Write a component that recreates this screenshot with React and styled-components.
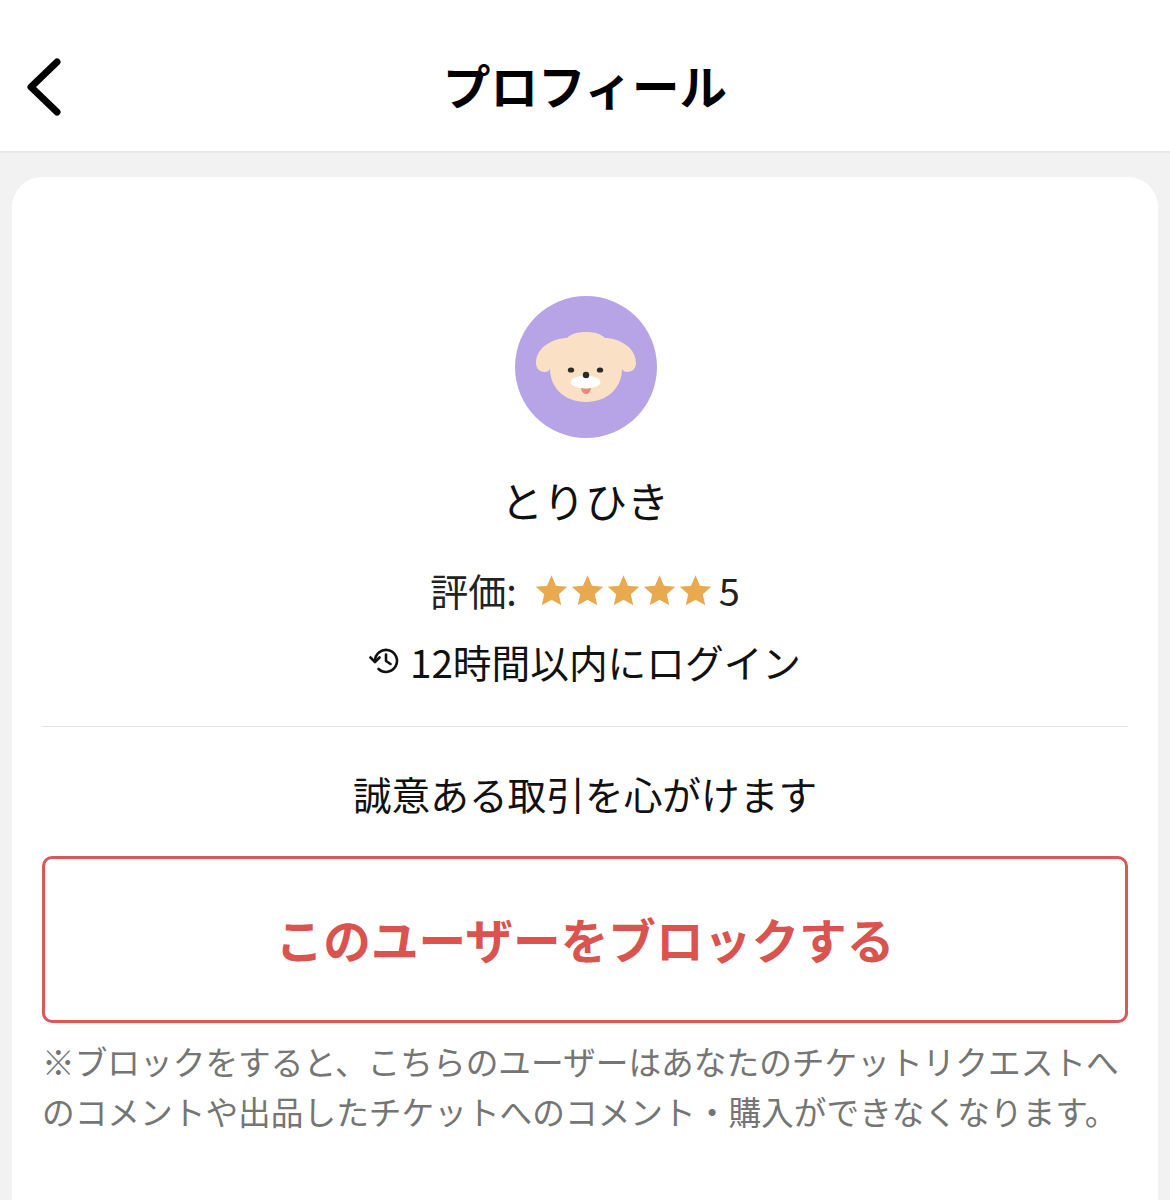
import React from 'react';
import styled, { createGlobalStyle } from 'styled-components';

const GlobalStyle = createGlobalStyle`
    html, body {
        margin: 0;
        padding: 0;
        background: #f2f2f2;
    }
    body {
        font-family: "Noto Sans CJK JP", "Noto Sans", sans-serif;
        color: #111;
    }
`;

const Page = styled.div`
    width: 1170px;
    height: 1200px;
    overflow: hidden;
    background: #f2f2f2;
`;

const Header = styled.header`
    height: 153px;
    padding-top: 18px;
    box-sizing: border-box;
    display: flex;
    align-items: center;
    justify-content: center;
    position: relative;
    background: #fff;
    border-bottom: 2px solid #e8e8e8;
`;

const BackButton = styled.div`
    position: absolute;
    left: 22px;
    top: 54px;
    width: 46px;
    height: 66px;
`;

const Title = styled.h1`
    margin: 0;
    font-size: 47.5px;
    font-weight: 700;
    line-height: 1;
    color: #000;
`;

const Card = styled.main`
    margin: 24px 12px 0;
    padding: 119px 30px 0;
    height: 1100px;
    box-sizing: border-box;
    background: #fff;
    border-radius: 30px;
    display: flex;
    flex-direction: column;
    align-items: center;
`;

const Avatar = styled.svg`
    display: block;
    width: 142px;
    height: 142px;
    margin-left: 2px;
`;

const Name = styled.div`
    margin-top: 31px;
    font-size: 42px;
    line-height: 62px;
`;

const RatingRow = styled.div`
    margin-top: 32px;
    display: flex;
    align-items: center;
    font-size: 38px;
    line-height: 54px;
    color: #222;
`;

const Stars = styled.span`
    display: flex;
    gap: 1px;
    margin: 0 6px 0 17px;
`;

const LoginRow = styled.div`
    margin-top: 17px;
    display: flex;
    align-items: center;
    gap: 9px;
    font-size: 38.7px;
    line-height: 54px;
    color: #111;
`;

const Divider = styled.hr`
    align-self: stretch;
    margin: 38px 0 0;
    border: 0;
    border-top: 1px solid #e4e4e4;
`;

const Bio = styled.p`
    margin: 39px 0 0;
    font-size: 38.7px;
    line-height: 54px;
    color: #111;
`;

const BlockButton = styled.button`
    align-self: stretch;
    margin-top: 36px;
    height: 167px;
    padding: 0 0 3px;
    box-sizing: border-box;
    background: #fff;
    border: 3px solid #d9585a;
    border-radius: 10px;
    font-family: inherit;
    font-size: 47.7px;
    font-weight: 700;
    color: #d9534f;
`;

const Note = styled.p`
    align-self: stretch;
    margin: 13px 0 0;
    font-size: 32.7px;
    line-height: 49.5px;
    color: #757575;
`;

const Star = () => (
    <svg width="35" height="35" viewBox="0 0 24 24">
        <path d="M12 1.6l3.1 7.1 7.7.7-5.8 5.1 1.7 7.6L12 18.4l-6.7 3.7L7 14.5 1.2 9.4l7.7-.7z" fill="#e9a94f" />
    </svg>
);

const DogAvatar = () => (
    <Avatar viewBox="0 0 142 142">
        <circle cx="71" cy="71" r="71" fill="#b6a4e6" />
        <path d="M71 36C62 36 56 38 52 42C40 42 21 50 21 67C21 73 25 76 30 76C32 76 34 75 35 73C35 92 50 106 71 106C92 106 107 92 107 73C108 75 110 76 112 76C117 76 121 73 121 67C121 50 102 42 90 42C86 38 80 36 71 36Z" fill="#fae0c4" />
        <ellipse cx="70.500" cy="86" rx="15" ry="6.500" fill="#fff" />
        <path d="M66 92c3 1 7 1 10 0-.5 4-2.500 6-5 6s-4.500-2-5-6z" fill="#e58a83" />
        <ellipse cx="56" cy="74" rx="3.200" ry="2.600" fill="#2d2a28" />
        <ellipse cx="85" cy="74" rx="3.200" ry="2.600" fill="#2d2a28" />
        <circle cx="71" cy="79" r="3.200" fill="#2d2a28" />
    </Avatar>
);

export default function App() {
    return (
        <Page>
            <GlobalStyle />
            <Header>
                <BackButton>
                    <svg width="46" height="66" viewBox="0 0 46 66">
                        <path d="M35 8L9 33l26 25" fill="none" stroke="#000" strokeWidth="7" strokeLinecap="round" strokeLinejoin="round" />
                    </svg>
                </BackButton>
                <Title>プロフィール</Title>
            </Header>
            <Card>
                <DogAvatar />
                <Name>とりひき</Name>
                <RatingRow>
                    評価:
                    <Stars>
                        {[0, 1, 2, 3, 4].map((i) => <Star key={i} />)}
                    </Stars>
                    5
                </RatingRow>
                <LoginRow>
                    <svg width="32" height="32" viewBox="0 0 32 32" fill="none" stroke="#111" strokeWidth="2.6" strokeLinecap="round" strokeLinejoin="round">
                        <path d="M6 16a11 11 0 1 1 3.500 8" />
                        <path d="M1.500 12.500L6 17l4.500-4.500" />
                        <path d="M17 9.500V16l4.500 3" />
                    </svg>
                    12時間以内にログイン
                </LoginRow>
                <Divider />
                <Bio>誠意ある取引を心がけます</Bio>
                <BlockButton>このユーザーをブロックする</BlockButton>
                <Note>※ブロックをすると、こちらのユーザーはあなたのチケットリクエストへのコメントや出品したチケットへのコメント・購入ができなくなります。</Note>
            </Card>
        </Page>
    );
}
